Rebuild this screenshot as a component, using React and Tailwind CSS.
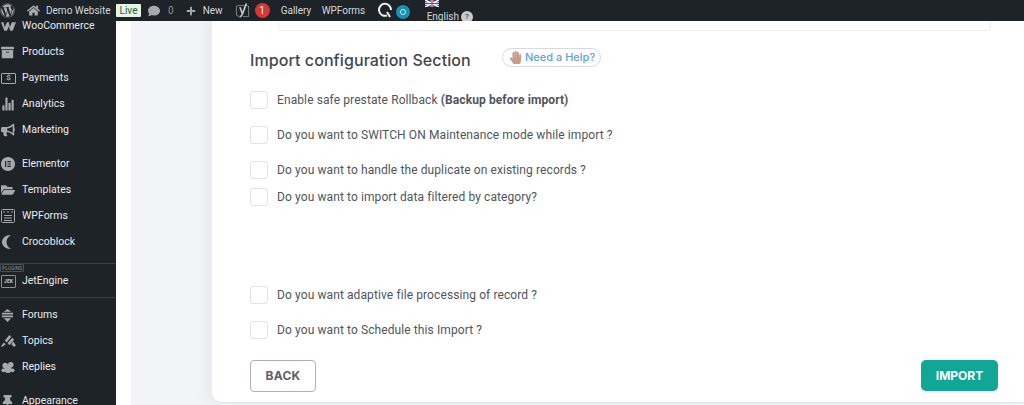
import React from 'react';
import { FaWordpress, FaHome, FaComment, FaPlus, FaBullhorn, FaFolderOpen, FaThumbtack, FaArchive, FaHandPaper, FaYoast } from 'react-icons/fa';
import { IoStatsChart } from 'react-icons/io5';
import { SiElementor } from 'react-icons/si';

const Woo = () => (
  <svg viewBox="0 0 18 10" className="w-[15px] h-[9px]" fill="#a7aaad">
    <path d="M0 0h3l1.5 6L7 0h2.500l1 6L13 0h5l-4 10h-3L9.500 5 7 10H4z" />
  </svg>
);
const Payments = () => (
  <div className="w-[15px] h-[11px] border border-[#a7aaad] rounded-[1px] flex items-center justify-center text-[8px] leading-none font-bold text-[#a7aaad]">$</div>
);
const WpForms = () => (
  <svg viewBox="0 0 14 14" className="w-[14px] h-[14px]" fill="none" stroke="#a7aaad" strokeWidth="1">
    <rect x="0.500" y="0.500" width="13" height="13" rx="1" />
    <path d="M3 2v2M7 2v2M11 2v2M3 6.500h8M3 9h8M3 11.500h8" />
  </svg>
);
const Croco = () => (
  <svg viewBox="0 0 12 14" className="w-[12px] h-[14px]" fill="#a7aaad">
    <path d="M10 0C4 0 1 3.500 1 7s3 7 9 7C7 12 5.500 10 5.500 7S7 2 10 0z" />
  </svg>
);
const Forums = () => (
  <svg viewBox="0 0 14 14" className="w-[13px] h-[13px]" fill="#a7aaad">
    <path d="M7 0l4 3H3zM1 4h12v2H1zM1 7h12v2H1zM3 10h8l-4 4z" />
  </svg>
);
const Topics = () => (
  <svg viewBox="0 0 16 14" className="w-[15px] h-[13px]" fill="#a7aaad">
    <path d="M9 0l2 2-5 6-2-2zM12 3l2 2-5 6-2-2zM3 8l2 2-4 3-1-1zM13 7l3 4-2 2-3-3z" />
  </svg>
);
const Replies = () => (
  <svg viewBox="0 0 14 14" className="w-[14px] h-[13px]" fill="#a7aaad">
    <circle cx="4" cy="5" r="3" /><circle cx="10" cy="4" r="3" /><circle cx="7" cy="9" r="4" /><circle cx="2" cy="10" r="2" /><circle cx="12" cy="10" r="2" />
  </svg>
);
const Flag = () => (
  <svg viewBox="0 0 14 7" className="w-[14px] h-[7px]">
    <rect width="14" height="7" fill="#2b3f80" />
    <path d="M0 0l14 7M14 0L0 7" stroke="#fff" strokeWidth="1.500" />
    <path d="M7 0v7M0 3.500h14" stroke="#fff" strokeWidth="2.500" />
    <path d="M7 0v7M0 3.500h14" stroke="#c8283c" strokeWidth="1.200" />
  </svg>
);
const QIcon = () => (
  <svg viewBox="0 0 14 17" className="w-[14px] h-[17px]" fill="none" stroke="#eceeef" strokeWidth="2">
    <path d="M9 13.500A6 6 0 1 1 13 8" />
    <path d="M9 10l3 5" />
  </svg>
);

const menu = [
  { label: 'WooCommerce', icon: <Woo /> },
  { label: 'Products', icon: <FaArchive className="text-[#a7aaad] text-[13px]" /> },
  { label: 'Payments', icon: <Payments /> },
  { label: 'Analytics', icon: <IoStatsChart className="text-[#a7aaad] text-[14px]" /> },
  { label: 'Marketing', icon: <FaBullhorn className="text-[#a7aaad] text-[14px]" /> },
  { label: 'Elementor', icon: <SiElementor className="text-[#a7aaad] text-[14px]" />, gap: true },
  { label: 'Templates', icon: <FaFolderOpen className="text-[#a7aaad] text-[14px]" /> },
  { label: 'WPForms', icon: <WpForms /> },
  { label: 'Crocoblock', icon: <Croco /> },
];
const bottomMenu = [
  { label: 'Forums', icon: <Forums /> },
  { label: 'Topics', icon: <Topics /> },
  { label: 'Replies', icon: <Replies /> },
  { label: 'Appearance', icon: <FaThumbtack className="text-[#a7aaad] text-[13px]" />, gap: true },
];

const options = [
  { text: <>Enable safe prestate Rollback <b className="font-bold">(Backup before import)</b></>, mt: 'mt-[21px]' },
  { text: 'Do you want to SWITCH ON Maintenance mode while import ?', mt: 'mt-[17px]' },
  { text: 'Do you want to handle the duplicate on existing records ?', mt: 'mt-[17px]' },
  { text: 'Do you want to import data filtered by category?', mt: 'mt-[9px]' },
  { text: 'Do you want adaptive file processing of record ?', mt: 'mt-[80px]' },
  { text: 'Do you want to Schedule this Import ?', mt: 'mt-[17px]' },
];

const MenuItem = ({ item }) => (
  <div className={`flex items-center h-[26px] ${item.gap ? 'mt-[8px]' : ''}`}>
    <div className="w-[22px] pl-[1px] shrink-0 flex items-center">{item.icon}</div>
    <span className="text-[10.500px] leading-none text-[#e8eaeb]">{item.label}</span>
  </div>
);

export default function App() {
  return (
    <div className="w-[1024px] h-[405px] overflow-hidden flex flex-col bg-white font-['Roboto',sans-serif]">
      {/* admin bar */}
      <div className="relative z-10 h-[21px] shrink-0 bg-[#1d2327] flex items-center overflow-hidden text-[10px] text-[#d5d8da]">
        <FaWordpress className="text-[#a7aaad] text-[15px]" />
        <FaHome className="text-[#a7aaad] text-[13px] ml-[12px]" />
        <span className="ml-[6px] w-[64px] shrink-0 whitespace-nowrap">Demo Website</span>
        <span className="ml-[6px] w-[25px] h-[13px] flex items-center justify-center bg-[#e8f3e6] text-[#17692f] rounded-[1px]">Live</span>
        <FaComment className="text-[#a7aaad] text-[12px] ml-[7px]" />
        <span className="ml-[8px] text-[#8c8f94]">0</span>
        <FaPlus className="text-[#a7aaad] text-[10px] ml-[12px]" />
        <span className="ml-[7px] w-[20px]">New</span>
        <FaYoast className="text-[#c9cccf] text-[15px] ml-[12px]" />
        <span className="ml-[5px] w-[15px] h-[15px] rounded-full bg-[#d63638] text-white flex items-center justify-center">1</span>
        <span className="ml-[11px] w-[30px]">Gallery</span>
        <span className="ml-[11px] w-[41px]">WPForms</span>
        <div className="ml-[15px]"><QIcon /></div>
        <div className="ml-[4px] mt-[3px] w-[14px] h-[14px] rounded-full bg-[#1593b0] flex items-center justify-center">
          <div className="w-[6px] h-[6px] rounded-full border border-[#bfe8f0]" />
        </div>
        <div className="ml-[15px] flex flex-col items-start self-start">
          <Flag />
          <div className="flex items-center mt-[4px] ml-[2px] leading-none">
            <span>English</span>
            <span className="ml-[2px] w-[12px] h-[12px] rounded-full bg-[#c9cccf] text-[#1d2327] text-[8px] flex items-center justify-center">?</span>
          </div>
        </div>
      </div>

      <div className="flex flex-1 min-h-0">
        {/* sidebar */}
        <div className="w-[116px] shrink-0 bg-[#1d2327] overflow-hidden">
          <div className="-mt-[8px]">
            {menu.map((item) => <MenuItem key={item.label} item={item} />)}
            <div className="mt-[8px] h-px bg-[#3a4046]" />
            <div className="h-[4px] relative">
              <span className="absolute left-0 top-0 border border-[#4a5056] rounded-[1px] px-[1px] text-[5px] leading-[6px] text-[#8c8f94]">PLUGINS</span>
            </div>
            <MenuItem item={{ label: 'JetEngine', icon: <div className="w-[15px] h-[13px] border border-[#8c8f94] rounded-[1px] text-[5px] leading-[11px] text-center text-[#c3c4c7] font-bold">JEK</div> }} />
            <div className="mt-[3px] h-px bg-[#3a4046]" />
            <div className="mt-[4px]">
              {bottomMenu.map((item) => <MenuItem key={item.label} item={item} />)}
            </div>
          </div>
        </div>

        {/* content */}
        <div className="flex-1 min-w-0 pl-[15px] bg-white flex">
          <div className="flex-1 min-w-0 pl-[81px] bg-[#f3f4f8] flex">
            <div className="flex-1 min-w-0 h-[382px] bg-white rounded-bl-[10px] border-b border-[#e4e5e7] shadow-[-6px_0_12px_rgba(60,70,90,0.06)] pl-[38px] pr-[26px]">
              <div className="ml-[28px] mr-[7px] h-[10px] border border-t-0 border-[#eeeeef] rounded-b-[4px]" />

              <div className="mt-[19px] h-[20px] flex items-center">
                <h2 className="font-['Inter',sans-serif] font-medium text-[16px] tracking-[0.08px] text-[#3f4650] leading-none w-[252px]">Import configuration Section</h2>
                <div className="h-[19px] w-[99px] rounded-full border border-[#d6dbe0] flex items-center pl-[6px] -mt-[5px]">
                  <FaHandPaper className="text-[#c99a88] text-[13px]" />
                  <span className="ml-[3px] font-['Inter',sans-serif] font-medium text-[11px] text-[#5fa3d6]">Need a Help?</span>
                </div>
              </div>

              {options.map((o, i) => (
                <div key={i} className={`flex items-center h-[18px] ${o.mt}`}>
                  <div className="w-[18px] h-[18px] shrink-0 rounded-[3px] border border-[#e2e4e8] bg-white" />
                  <span className="ml-[9px] text-[12px] tracking-[0.1px] text-[#4f555c] leading-none">{o.text}</span>
                </div>
              ))}

              <div className="mt-[21px] flex items-start justify-between">
                <button className="w-[66px] h-[32px] rounded-[4px] border border-[#a9b0b8] bg-white font-['Inter',sans-serif] font-bold text-[12px] tracking-[0.3px] text-[#59616b]">BACK</button>
                <button className="w-[77px] h-[31px] rounded-[5px] bg-[#10a797] font-['Inter',sans-serif] font-bold text-[12px] text-white">IMPORT</button>
              </div>
            </div>
          </div>
        </div>
      </div>
    </div>
  );
}
